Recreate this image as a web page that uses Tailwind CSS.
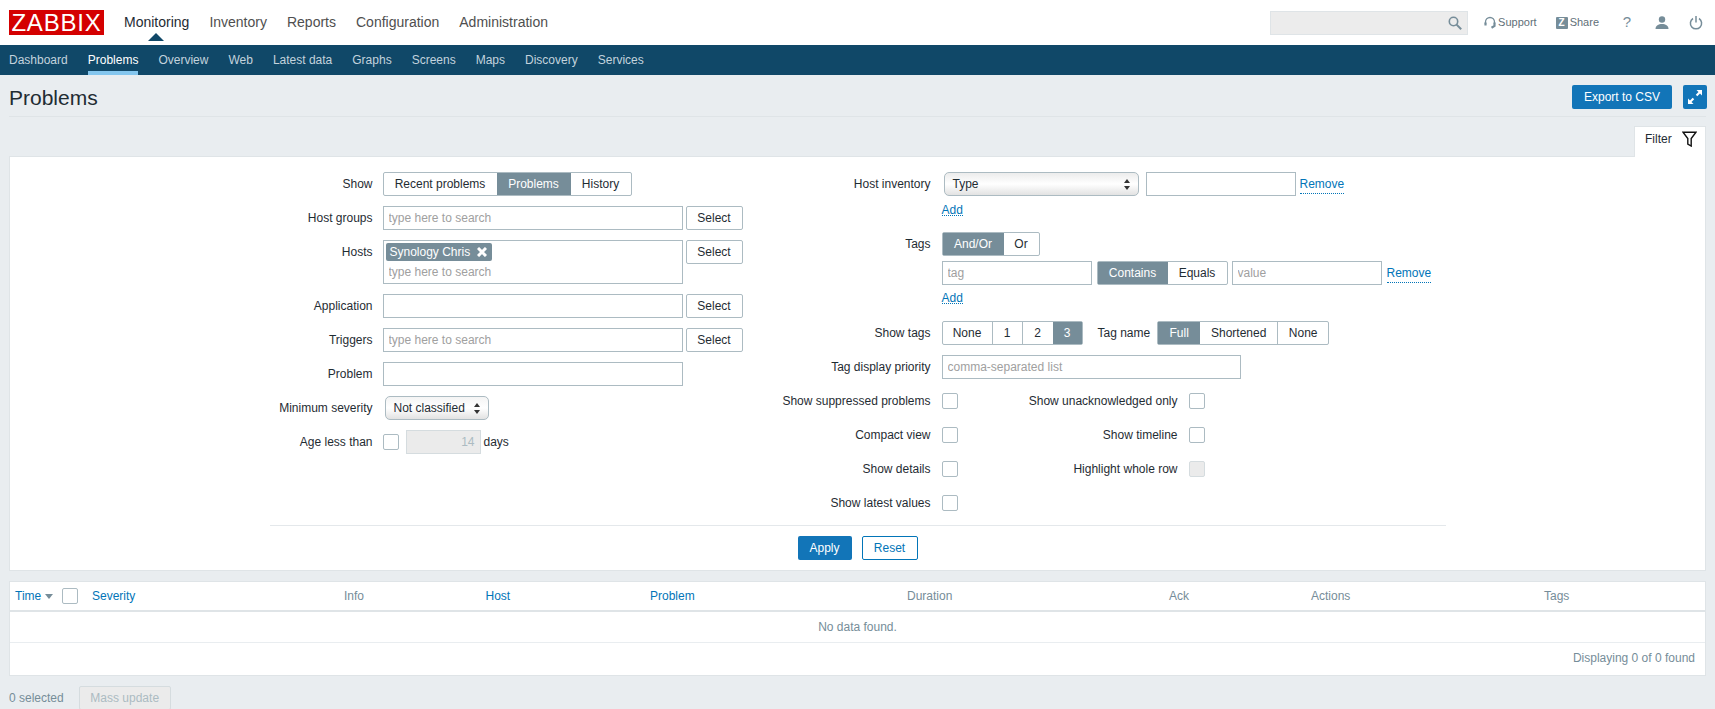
<!DOCTYPE html>
<html lang="en">
  <head>
    <meta charset="UTF-8" />
    <title>Problems</title>
    <script src="https://cdn.jsdelivr.net/npm/@tailwindcss/browser@4"></script>
  </head>
  <body class="h-screen overflow-hidden bg-[#e9edf0] font-['Liberation_Sans',Arial,sans-serif] text-[12px] text-[#1f2c33]">
    <!-- Top menu -->
    <header class="h-[45px] bg-white flex items-center pl-[9px] pr-[12px]">
      <div class="w-[95px] h-[25px] bg-[#d40000] text-white text-[24px] leading-[25px] tracking-[0.8px] text-center">ZABBIX</div>
      <nav class="relative flex ml-[20px] gap-[20px] text-[14px] text-[#4f4f4f]">
        <a class="text-[#1f2c33]">Monitoring</a>
        <a>Inventory</a>
        <a>Reports</a>
        <a>Configuration</a>
        <a>Administration</a>
        <svg class="absolute left-[24px] top-[21px]" width="16" height="8" viewBox="0 0 16 8"><path d="M0 8 8 0l8 8z" fill="#104868" /></svg>
      </nav>
      <div class="ml-auto flex items-center text-[11px] text-[#5f6f78]">
        <div class="w-[198px] h-[24px] bg-[#ececec] border border-[#dfe4e7] flex items-center justify-end pr-[5px]">
          <svg width="14" height="14" viewBox="0 0 14 14" fill="none" stroke="#768d99" stroke-width="1.6"><circle cx="5.5" cy="5.5" r="4.2" /><path d="m8.6 8.6 4.6 4.6" stroke-width="2" /></svg>
        </div>
        <svg class="ml-[16px]" width="12" height="13" viewBox="0 0 12 13" fill="none" stroke="#768d99" stroke-width="1.3"><path d="M1.500 8V6a4.500 4.500 0 0 1 9 0v2" /><path d="M1.500 6.500v3M10.500 6.500v3.500l-3 1.800" stroke-width="2.200" /></svg>
        <span class="ml-[2px]">Support</span>
        <span class="ml-[19px] w-[12px] h-[12px] bg-[#768d99] rounded-[1px] text-white text-[10px] leading-[12px] font-bold text-center">Z</span>
        <span class="ml-[2px]">Share</span>
        <span class="ml-[21px] w-[14px] text-center text-[15px] text-[#768d99]">?</span>
        <svg class="ml-[21px]" width="14" height="13" viewBox="0 0 14 13" fill="#768d99"><circle cx="7" cy="3.500" r="3.200" /><path d="M0.500 13c0-3.500 3-5 6.500-5s6.500 1.500 6.500 5z" /></svg>
        <svg class="ml-[20px]" width="14" height="14" viewBox="0 0 14 14" fill="none" stroke="#768d99" stroke-width="1.500"><path d="M4 2.500a5.600 5.600 0 1 0 6 0" /><path d="M7 0v6.500" /></svg>
      </div>
    </header>

    <!-- Sub menu -->
    <nav class="h-[30px] bg-[#104868] flex gap-[20px] pl-[9px] text-[#c3d3dd] leading-[30px]">
      <a>Dashboard</a>
      <a class="h-[30px] text-white border-b-[4px] border-[#84c6ee]">Problems</a>
      <a>Overview</a>
      <a>Web</a>
      <a>Latest data</a>
      <a>Graphs</a>
      <a>Screens</a>
      <a>Maps</a>
      <a>Discovery</a>
      <a>Services</a>
    </nav>

    <main class="mx-[9px]">
      <!-- Title -->
      <div class="h-[42px] flex items-center border-b border-[#dfe4e7] pb-[7px] pt-[10px]">
        <h1 class="text-[21px] leading-[24px] mt-[2px]">Problems</h1>
        <button class="ml-auto w-[100px] h-[24px] bg-[#1275b8] text-white rounded-[2px]">Export to CSV</button>
        <button class="ml-[11px] -mr-px w-[24px] h-[24px] bg-[#1275b8] rounded-[2px] flex items-center justify-center">
          <svg width="16" height="16" viewBox="0 0 16 16" fill="#fff"><path d="M9.500 1H15v5.500l-2-2-2.700 2.700-1.500-1.500L11.500 3zM6.500 15H1V9.500l2 2 2.700-2.700 1.500 1.500L4.500 13z" /></svg>
        </button>
      </div>

      <!-- Filter tab -->
      <div class="flex justify-end mt-[9px] -mb-px">
        <div class="relative w-[72px] h-[31px] bg-white border border-b-0 border-[#dfe4e7] flex items-center pl-[10px] pb-[6px] gap-[10px]">
          <span>Filter</span>
          <svg width="15" height="16" viewBox="0 0 15 16" fill="none" stroke="#111" stroke-width="1.400"><path d="M1 1.200h13L9.200 7.500V15L5.800 13V7.500z" /></svg>
        </div>
      </div>

      <!-- Filter form -->
      <section class="h-[415px] bg-white border border-[#dfe4e7] pt-[15px]">
        <div class="mx-auto w-[1176px] flex h-[354px] border-b border-[#e4e8eb]">
          <!-- Left column -->
          <div class="w-[500px] flex flex-col gap-[10px]">
            <div class="flex items-center h-[24px]">
              <label class="w-[103px] mr-[10px] text-right">Show</label>
              <div class="flex h-[24px] border border-[#acbbc2] rounded-[2px] leading-[22px] text-center">
                <span class="w-[113px]">Recent problems</span>
                <span class="w-[74px] bg-[#768d99] text-white">Problems</span>
                <span class="w-[60px]">History</span>
              </div>
            </div>
            <div class="flex items-center h-[24px]">
              <label class="w-[103px] mr-[10px] text-right">Host groups</label>
              <input class="w-[300px] h-[24px] border border-[#acbbc2] px-[5px] placeholder:text-[#a0a0a0]" placeholder="type here to search" />
              <button class="ml-[3px] w-[57px] h-[24px] border border-[#acbbc2] rounded-[2px]">Select</button>
            </div>
            <div class="flex items-start h-[44px]">
              <label class="w-[103px] mr-[10px] text-right leading-[24px]">Hosts</label>
              <div class="w-[300px] h-[44px] border border-[#acbbc2] px-[2px] pt-[2px]">
                <span class="flex items-center w-[106px] h-[18px] bg-[#768d99] text-white rounded-[2px] pl-[4px] gap-[7px]">
                  Synology Chris
                  <svg width="10" height="10" viewBox="0 0 10 10" stroke="#fff" stroke-width="3"><path d="m1 1 8 8M9 1 1 9" /></svg>
                </span>
                <input class="w-full h-[20px] mt-px px-[3px] placeholder:text-[#a0a0a0]" placeholder="type here to search" />
              </div>
              <button class="ml-[3px] w-[57px] h-[24px] border border-[#acbbc2] rounded-[2px]">Select</button>
            </div>
            <div class="flex items-center h-[24px]">
              <label class="w-[103px] mr-[10px] text-right">Application</label>
              <input class="w-[300px] h-[24px] border border-[#acbbc2] px-[5px]" />
              <button class="ml-[3px] w-[57px] h-[24px] border border-[#acbbc2] rounded-[2px]">Select</button>
            </div>
            <div class="flex items-center h-[24px]">
              <label class="w-[103px] mr-[10px] text-right">Triggers</label>
              <input class="w-[300px] h-[24px] border border-[#acbbc2] px-[5px] placeholder:text-[#a0a0a0]" placeholder="type here to search" />
              <button class="ml-[3px] w-[57px] h-[24px] border border-[#acbbc2] rounded-[2px]">Select</button>
            </div>
            <div class="flex items-center h-[24px]">
              <label class="w-[103px] mr-[10px] text-right">Problem</label>
              <input class="w-[300px] h-[24px] border border-[#acbbc2] px-[5px]" />
            </div>
            <div class="flex items-center h-[24px]">
              <label class="w-[103px] mr-[10px] text-right">Minimum severity</label>
              <div class="ml-[2px] w-[104px] h-[24px] flex items-center justify-between px-[8px] border border-[#acbbc2] rounded-[5px] bg-gradient-to-b from-[#f4f4f4] via-[#ffffff] to-[#e2e2e2]">
                <span>Not classified</span>
                <svg width="6" height="11" viewBox="0 0 6 11" fill="#333"><path d="M3 0l3 4H0zM3 11 0 7h6z" /></svg>
              </div>
            </div>
            <div class="flex items-center h-[24px]">
              <label class="w-[103px] mr-[10px] text-right">Age less than</label>
              <input type="checkbox" class="appearance-none w-[16px] h-[16px] border border-[#acbbc2] rounded-[2px]" />
              <input disabled class="ml-[7px] w-[75px] h-[24px] bg-[#ebebeb] border border-[#d5dcdf] px-[5px] text-right text-[#acbbc2]" value="14" />
              <span class="ml-[3px]">days</span>
            </div>
          </div>

          <!-- Right column -->
          <div class="flex flex-col">
            <div class="flex items-center h-[24px]">
              <label class="w-[161px] mr-[13px] text-right">Host inventory</label>
              <div class="w-[195px] h-[24px] flex items-center justify-between px-[8px] border border-[#acbbc2] rounded-[5px] bg-gradient-to-b from-[#ececec] via-[#ffffff] to-[#e2e2e2]">
                <span>Type</span>
                <svg width="6" height="11" viewBox="0 0 6 11" fill="#333"><path d="M3 0l3 4H0zM3 11 0 7h6z" /></svg>
              </div>
              <input class="ml-[7px] w-[150px] h-[24px] border border-[#acbbc2] px-[5px]" />
              <a class="ml-[4px] text-[#0275b8] border-b border-dotted border-[#0275b8]">Remove</a>
            </div>
            <a class="ml-[172px] mt-[5px] w-fit h-[15px] text-[#0275b8] border-b border-dotted border-[#0275b8]">Add</a>

            <div class="flex items-center h-[24px] mt-[16px]">
              <label class="w-[161px] mr-[11px] text-right">Tags</label>
              <div class="flex h-[24px] border border-[#acbbc2] rounded-[2px] leading-[22px] text-center">
                <span class="w-[61px] bg-[#768d99] text-white">And/Or</span>
                <span class="w-[35px]">Or</span>
              </div>
            </div>
            <div class="flex items-center h-[24px] mt-[5px] ml-[172px]">
              <input class="w-[150px] h-[24px] border border-[#acbbc2] px-[5px] placeholder:text-[#a0a0a0]" placeholder="tag" />
              <div class="ml-[5px] flex h-[24px] border border-[#acbbc2] rounded-[2px] leading-[22px] text-center">
                <span class="w-[70px] bg-[#768d99] text-white">Contains</span>
                <span class="w-[59px]">Equals</span>
              </div>
              <input class="ml-[4px] w-[150px] h-[24px] border border-[#acbbc2] px-[5px] placeholder:text-[#a0a0a0]" placeholder="value" />
              <a class="ml-[5px] text-[#0275b8] border-b border-dotted border-[#0275b8]">Remove</a>
            </div>
            <a class="ml-[172px] mt-[4px] w-fit h-[15px] text-[#0275b8] border-b border-dotted border-[#0275b8]">Add</a>

            <div class="flex items-center h-[24px] mt-[17px]">
              <label class="w-[161px] mr-[11px] text-right">Show tags</label>
              <div class="flex h-[24px] border border-[#acbbc2] rounded-[2px] leading-[22px] text-center">
                <span class="w-[50px] border-r border-[#acbbc2]">None</span>
                <span class="w-[30px] border-r border-[#acbbc2]">1</span>
                <span class="w-[30px]">2</span>
                <span class="w-[29px] bg-[#768d99] text-white">3</span>
              </div>
              <span class="ml-[15px]">Tag name</span>
              <div class="ml-[7px] flex h-[24px] border border-[#acbbc2] rounded-[2px] leading-[22px] text-center">
                <span class="w-[42px] bg-[#768d99] text-white">Full</span>
                <span class="w-[78px] border-r border-[#acbbc2]">Shortened</span>
                <span class="w-[50px]">None</span>
              </div>
            </div>
            <div class="flex items-center h-[24px] mt-[10px]">
              <label class="w-[161px] mr-[11px] text-right">Tag display priority</label>
              <input class="w-[299px] h-[24px] border border-[#acbbc2] px-[5px] placeholder:text-[#a0a0a0]" placeholder="comma-separated list" />
            </div>

            <div class="grid grid-cols-[188px_1fr] gap-y-[10px] mt-[10px]">
              <div class="flex items-center h-[24px]">
                <label class="w-[161px] mr-[11px] text-right shrink-0">Show suppressed problems</label>
                <input type="checkbox" class="appearance-none w-[16px] h-[16px] border border-[#acbbc2] rounded-[2px]" />
              </div>
              <div class="flex items-center h-[24px]">
                <label class="w-[220px] mr-[11px] text-right">Show unacknowledged only</label>
                <input type="checkbox" class="appearance-none w-[16px] h-[16px] border border-[#acbbc2] rounded-[2px]" />
              </div>
              <div class="flex items-center h-[24px]">
                <label class="w-[161px] mr-[11px] text-right shrink-0">Compact view</label>
                <input type="checkbox" class="appearance-none w-[16px] h-[16px] border border-[#acbbc2] rounded-[2px]" />
              </div>
              <div class="flex items-center h-[24px]">
                <label class="w-[220px] mr-[11px] text-right">Show timeline</label>
                <input type="checkbox" class="appearance-none w-[16px] h-[16px] border border-[#acbbc2] rounded-[2px]" />
              </div>
              <div class="flex items-center h-[24px]">
                <label class="w-[161px] mr-[11px] text-right shrink-0">Show details</label>
                <input type="checkbox" class="appearance-none w-[16px] h-[16px] border border-[#acbbc2] rounded-[2px]" />
              </div>
              <div class="flex items-center h-[24px]">
                <label class="w-[220px] mr-[11px] text-right">Highlight whole row</label>
                <input type="checkbox" disabled class="appearance-none w-[16px] h-[16px] bg-[#ebebeb] border border-[#d5dcdf] rounded-[2px]" />
              </div>
              <div class="flex items-center h-[24px]">
                <label class="w-[161px] mr-[11px] text-right shrink-0">Show latest values</label>
                <input type="checkbox" class="appearance-none w-[16px] h-[16px] border border-[#acbbc2] rounded-[2px]" />
              </div>
            </div>
          </div>
        </div>
        <div class="flex justify-center gap-[10px] mt-[10px]">
          <button class="w-[54px] h-[24px] bg-[#1275b8] text-white rounded-[2px]">Apply</button>
          <button class="w-[56px] h-[24px] border border-[#0275b8] text-[#0275b8] rounded-[2px]">Reset</button>
        </div>
      </section>

      <!-- Problem list -->
      <section class="h-[95px] mt-[10px] bg-white border border-[#dfe4e7]">
        <div class="h-[30px] grid grid-cols-[47px_30px_252px_141.5px_164.5px_257px_262px_142px_233px_1fr] items-center pl-[5px] border-b-2 border-[#dfe4e7] text-[#768d99]">
          <a class="flex items-center gap-[4px] text-[#0275b8]">Time
            <svg width="8" height="5" viewBox="0 0 8 5" fill="#768d99"><path d="M0 0h8L4 5z" /></svg>
          </a>
          <input type="checkbox" class="appearance-none w-[16px] h-[16px] border border-[#acbbc2] rounded-[2px]" />
          <a class="text-[#0275b8]">Severity</a>
          <span>Info</span>
          <a class="text-[#0275b8]">Host</a>
          <a class="text-[#0275b8]">Problem</a>
          <span>Duration</span>
          <span>Ack</span>
          <span>Actions</span>
          <span>Tags</span>
        </div>
        <div class="h-[31px] leading-[30px] text-center text-[#768d99] border-b border-[#e9edf0]">No data found.</div>
        <div class="h-[31px] leading-[30px] text-right pr-[10px] text-[#768d99]">Displaying 0 of 0 found</div>
      </section>

      <!-- Bulk actions -->
      <div class="flex items-start mt-[10px] text-[#768d99]">
        <span class="leading-[24px]">0 selected</span>
        <button disabled class="ml-[15px] w-[92px] h-[24px] bg-[#ebebeb] border border-[#d5dcdf] rounded-[2px] text-[#acbbc2]">Mass update</button>
      </div>
    </main>
  </body>
</html>
